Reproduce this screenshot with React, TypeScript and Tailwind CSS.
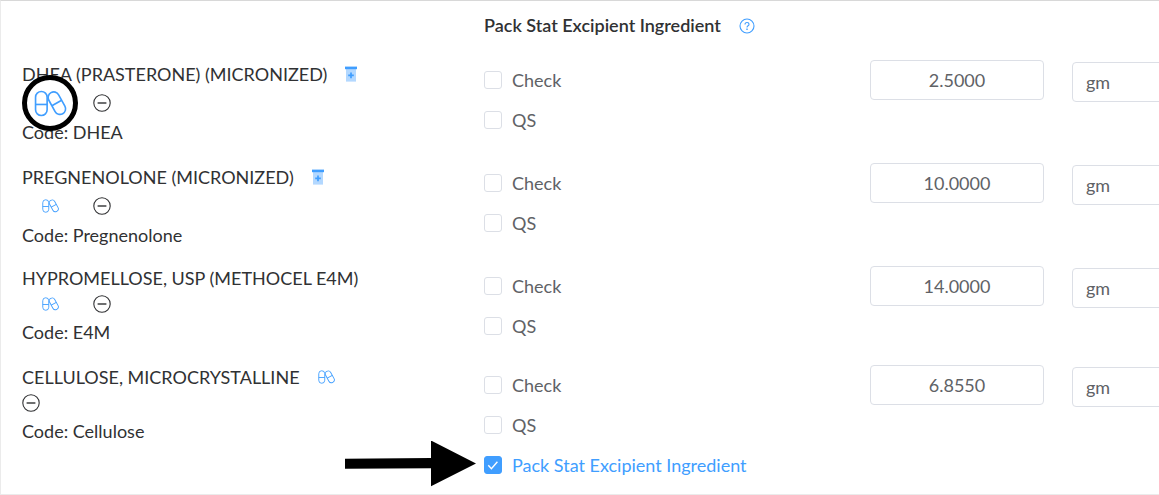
import { useState } from "react";

type Item = {
  id: string;
  name: string;
  code: string;
  amount: string;
  height: string;
  roomy?: boolean;
  container?: boolean;
  pillInTitle?: boolean;
  highlighted?: boolean;
  excipient?: boolean;
};

const items: Item[] = [
  { id: "dhea", name: "DHEA (PRASTERONE) (MICRONIZED)", code: "DHEA", amount: "2.5000", height: "min-h-[103px]", roomy: true, container: true, highlighted: true },
  { id: "preg", name: "PREGNENOLONE (MICRONIZED)", code: "Pregnenolone", amount: "10.0000", height: "min-h-[103px]", roomy: true, container: true },
  { id: "e4m", name: "HYPROMELLOSE, USP (METHOCEL E4M)", code: "E4M", amount: "14.0000", height: "min-h-[99px]" },
  { id: "cell", name: "CELLULOSE, MICROCRYSTALLINE", code: "Cellulose", amount: "6.8550", height: "min-h-[129px]", pillInTitle: true, excipient: true },
];

const columns = "grid grid-cols-[minmax(0,462fr)_minmax(0,386fr)_minmax(0,202fr)_minmax(0,87fr)]";

function Pills({ className, strokeWidth }: { className: string; strokeWidth: number }) {
  return (
    <svg viewBox="0 0 34 28" className={className} fill="none" stroke="currentColor" strokeWidth={strokeWidth} aria-hidden="true">
      <rect x="1.5" y="1.5" width="12" height="25" rx="6" />
      <path d="M1.5 15h12" />
      <g transform="rotate(-29 23.5 13.5)">
        <rect x="17.7" y="1.2" width="11.6" height="25" rx="5.8" />
        <path d="M17.7 13.5h11.6" />
      </g>
    </svg>
  );
}

function ContainerIcon() {
  return (
    <svg viewBox="0 0 12 16" className="h-4 w-3" aria-hidden="true">
      <rect x="1" y="3" width="10" height="12.6" fill="#b3d8ff" />
      <rect x="0" y="0.6" width="12" height="2.6" fill="#409eff" />
      <path d="M6 6.6v5.6M3.2 9.4h5.6" stroke="#409eff" strokeWidth="1.7" />
    </svg>
  );
}

function MinusButton() {
  return (
    <button type="button" aria-label="Remove" className="text-[#303133]">
      <svg viewBox="0 0 18 18" className="size-[18px]" fill="none" stroke="currentColor" strokeWidth="1.1" aria-hidden="true">
        <circle cx="9" cy="9" r="8.2" />
        <path d="M4.6 9h8.8" strokeWidth="1.4" />
      </svg>
    </button>
  );
}

function PillsButton() {
  return (
    <button type="button" aria-label="Pack stat" className="text-[#409eff]">
      <Pills className="h-[14px] w-[17px]" strokeWidth={1.8} />
    </button>
  );
}

function Tick({ label, initial = false }: { label: string; initial?: boolean }) {
  const [on, setOn] = useState(initial);
  return (
    <label className={`flex h-10 items-center gap-2.5 ${on ? "text-[#409eff]" : "text-[#606266]"}`}>
      <span className="grid size-[18px] shrink-0">
        <input
          type="checkbox"
          checked={on}
          onChange={(e) => setOn(e.target.checked)}
          className="col-start-1 row-start-1 appearance-none rounded-[3px] border border-[#dcdfe6] bg-white checked:border-[#409eff] checked:bg-[#409eff]"
        />
        {on && (
          <svg viewBox="0 0 18 18" className="pointer-events-none col-start-1 row-start-1" fill="none" stroke="white" strokeWidth="1.4" aria-hidden="true">
            <path d="M4.3 9.2l3.1 3.4 6-6.8" />
          </svg>
        )}
      </span>
      {label}
    </label>
  );
}

function Highlight() {
  return (
    <span className="pointer-events-none absolute left-0 top-1/2 z-10 flex size-14 -translate-y-1/2 items-center justify-center rounded-full border-[5px] border-black bg-white text-[#409eff]">
      <Pills className="h-[27px] w-[33px]" strokeWidth={1.7} />
    </span>
  );
}

function Arrow() {
  return (
    <svg viewBox="0 0 132 48" className="pointer-events-none absolute right-full top-1/2 mr-2 h-12 w-[132px] -translate-y-1/2" aria-hidden="true">
      <path d="M1 16.8L87 16V-1.5L132 21.5L87 44.3V26.3L1 26.8Z" fill="black" className="translate-y-px" />
    </svg>
  );
}

function Row({ item }: { item: Item }) {
  const titleHeight = item.roomy ? "h-7" : "h-6";
  const iconHeight = item.roomy ? "h-[30px]" : "h-7";
  return (
    <li className={`${columns} ${item.height}`}>
      <div className="text-[#303133]">
        <div className={`flex items-center gap-[18px] whitespace-nowrap ${titleHeight}`}>
          <span>{item.name}</span>
          {item.container && <ContainerIcon />}
          {item.pillInTitle && <PillsButton />}
        </div>
        <div className={`relative flex items-center ${iconHeight} ${item.pillInTitle ? "" : "gap-[34px] pl-5"}`}>
          {!item.pillInTitle && <PillsButton />}
          <MinusButton />
          {item.highlighted && <Highlight />}
        </div>
        <div className="flex h-7 items-center">Code: {item.code}</div>
      </div>
      <div>
        <Tick label="Check" />
        <Tick label="QS" />
        {item.excipient && (
          <div className="relative">
            <Tick label="Pack Stat Excipient Ingredient" initial />
            <Arrow />
          </div>
        )}
      </div>
      <div className="pr-7">
        <input
          type="text"
          aria-label={`${item.name} quantity`}
          defaultValue={item.amount}
          className="h-10 w-full rounded-[4px] border border-[#dcdfe6] bg-white text-center text-[#606266]"
        />
      </div>
      <div className="pt-0.5">
        <select
          aria-label={`${item.name} unit`}
          defaultValue="gm"
          className="h-10 w-44 appearance-none rounded-[4px] border border-[#dcdfe6] bg-white px-[13px] text-[#606266]"
        >
          <option>gm</option>
          <option>mg</option>
        </select>
      </div>
    </li>
  );
}

export default function App() {
  return (
    <main className="overflow-x-hidden border-y border-l border-[#ebebeb] border-t-[#d8d8d8] bg-white pl-[21px] font-['Lato','Noto_Sans',sans-serif] text-[18px] leading-6">
      <header className={columns}>
        <div className="col-start-2 flex h-[59px] items-start gap-[18px] whitespace-nowrap pt-3 font-semibold text-[#303133]">
          <h1>Pack Stat Excipient Ingredient</h1>
          <button type="button" aria-label="Help" className="flex h-[26px] items-center text-[#409eff]">
            <svg viewBox="0 0 16 16" className="size-4" fill="none" stroke="currentColor" strokeWidth="1.1" aria-hidden="true">
              <circle cx="8" cy="8" r="7" />
              <path d="M6 6.5c0-1.3.8-2 2-2s2 .8 2 1.9c0 1.4-2 1.4-2 3" />
              <path d="M8 10.6v1.3" strokeWidth="1.4" />
            </svg>
          </button>
        </div>
      </header>
      <ul>
        {items.map((item) => (
          <Row key={item.id} item={item} />
        ))}
      </ul>
    </main>
  );
}
